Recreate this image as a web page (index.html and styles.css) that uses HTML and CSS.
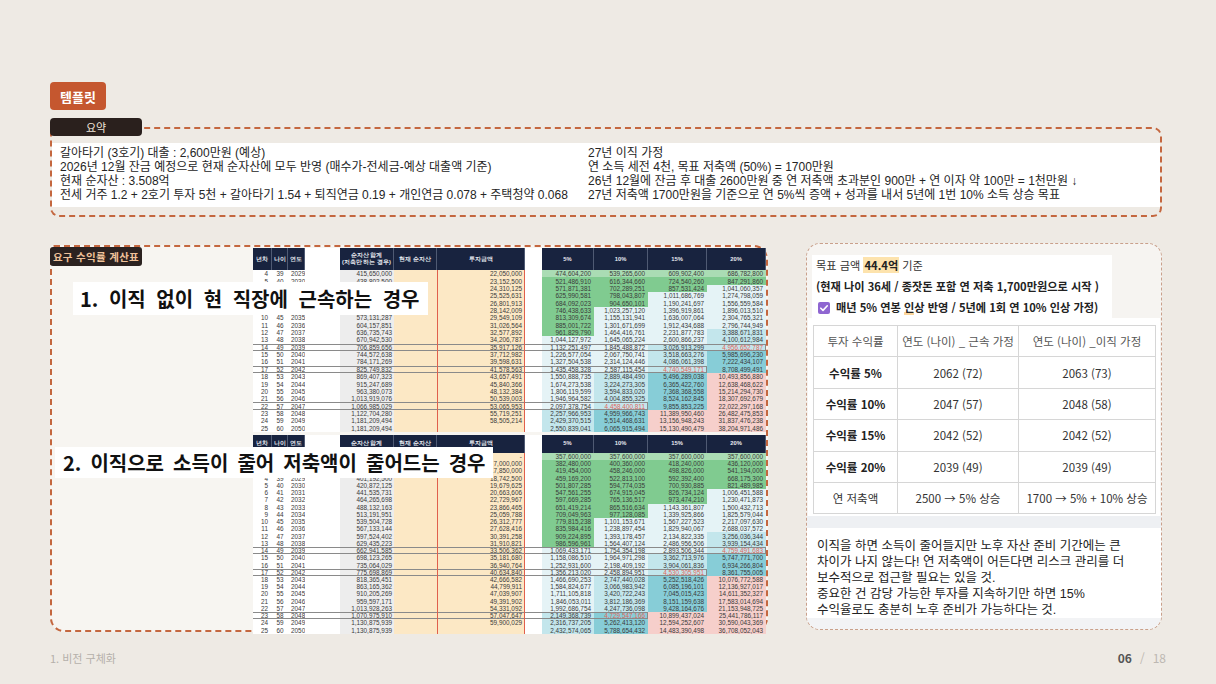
FILE: index.html
```html
<!DOCTYPE html>
<html lang="ko">
<head>
<meta charset="utf-8">
<title>요구 수익률 계산표</title>
<link rel="stylesheet" href="styles.css">
</head>
<body>
<div class="slide">
  <div class="badge">템플릿</div>

  <section class="summary">
    <div class="tab">요약</div>
    <div class="sum-box">
      <div class="sum-band">
        <div class="sum-col">
          <p>갈아타기 (3호기) 대출 : 2,600만원 (예상)</p>
          <p>2026년 12월 잔금 예정으로 현재 순자산에 모두 반영 (매수가-전세금-예상 대출액 기준)</p>
          <p>현재 순자산 : 3.508억</p>
          <p>전세 거주 1.2 + 2호기 투자 5천 + 갈아타기 1.54 + 퇴직연금 0.19 + 개인연금 0.078 + 주택청약 0.068</p>
        </div>
        <div class="sum-col">
          <p>27년 이직 가정</p>
          <p>연 소득 세전 4천, 목표 저축액 (50%) = 1700만원</p>
          <p>26년 12월에 잔금 후 대출 2600만원 중 연 저축액 초과분인 900만 + 연 이자 약 100만 = 1천만원 ↓</p>
          <p>27년 저축액 1700만원을 기준으로 연 5%씩 증액 + 성과를 내서 5년에 1번 10% 소득 상승 목표</p>
        </div>
      </div>
    </div>
  </section>

  <div class="middle">
    <section class="calc">
      <div class="calc-tab">요구 수익률 계산표</div>
      <div class="sheets">
        <div class="sheet sheet1" id="sheet1"></div>
        <div class="sheet sheet2" id="sheet2"></div>
      </div>
      <div class="case case1">1. 이직 없이 현 직장에 근속하는 경우</div>
      <div class="case case2">2. 이직으로 소득이 줄어 저축액이 줄어드는 경우</div>
    </section>

    <section class="result">
      <div class="goal">
        <p>목표 금액 <b class="hi">44.4억</b> 기준</p>
        <p class="bold">(현재 나이 36세 / 종잣돈 포함 연 저축 1,700만원으로 시작 )</p>
        <p class="bold"><svg class="box" width="12" height="12" viewBox="0 0 12 12"><rect x="0" y="0" width="12" height="12" rx="2" fill="#8f66d1"/><path d="M2.8 6.2 L5 8.4 L9.3 3.8" fill="none" stroke="#fff" stroke-width="1.6" stroke-linecap="round" stroke-linejoin="round"/></svg>매년 5% 연봉 <span class="mark">인</span>상 반영 / 5년에 1회 연 10% 인상 가정)</p>
      </div>
      <div class="tbl-wrap">
        <table class="rt">
          <tr><th>투자 수익률</th><th>연도 (나이) _ 근속 가정</th><th>연도 (나이) _이직 가정</th></tr>
          <tr><td class="k">수익률 5%</td><td>2062 (72)</td><td>2063 (73)</td></tr>
          <tr><td class="k">수익률 10%</td><td>2047 (57)</td><td>2048 (58)</td></tr>
          <tr><td class="k">수익률 15%</td><td>2042 (52)</td><td>2042 (52)</td></tr>
          <tr><td class="k">수익률 20%</td><td>2039 (49)</td><td>2039 (49)</td></tr>
          <tr><td>연 저축액</td><td>2500 → 5% 상승</td><td>1700 → 5% + 10% 상승</td></tr>
        </table>
      </div>
      <div class="band"></div>
      <div class="note">
        이직을 하면 소득이 줄어들지만 노후 자산 준비 기간에는 큰<br>
        차이가 나지 않는다! 연 저축액이 어든다면 리스크 관리를 더<br>
        보수적으로 접근할 필요는 있을 것.<br>
        중요한 건 감당 가능한 투자를 지속하기만 하면 15%<br>
        수익율로도 충분히 노후 준비가 가능하다는 것.
      </div>
      <div class="tail"></div>
    </section>
  </div>

  <footer class="foot">
    <span class="sec">1. 비전 구체화</span>
    <span class="pg"><b>06</b><span class="sl">/</span>18</span>
  </footer>
</div>
<script src="script.js"></script>
</body>
</html>
```

FILE: styles.css
```css
* { box-sizing: border-box; margin: 0; padding: 0; }
html, body { width: 1216px; height: 684px; overflow: hidden; }
body {
  background: #eeeae4;
  font-family: "Noto Sans CJK KR", "Noto Sans", sans-serif;
  color: #222;
}
.slide { padding: 82px 54px 0 50px; }

.badge {
  display: flex; align-items: center; justify-content: center;
  width: 56px; height: 28px;
  background: #c5572f; color: #fff;
  font-size: 13px; font-weight: 700;
  border-radius: 4px;
}

/* summary */
.summary { margin-top: 8px; }
.tab {
  position: relative; z-index: 2;
  width: 92px; height: 18px;
  background: #2a201d; color: #efe5da;
  font-size: 11px;
  border-radius: 4px;
  display: flex; align-items: center; justify-content: center;
}
.sum-box {
  margin-top: -9px;
  height: 90px;
  border: 2px dashed #c4673f;
  border-radius: 4px 9px 9px 9px;
  padding-top: 14px;
}
.sum-band {
  background: #fff;
  height: 64px;
  padding: 3px 8px;
  display: flex;
  font-family: "Liberation Sans", "Noto Sans CJK KR", sans-serif;
  font-size: 12px; line-height: 14px;
  color: #252525;
  white-space: nowrap;
}
.sum-col { width: 528px; }

/* middle */
.middle { display: flex; align-items: flex-start; gap: 38px; margin-top: 26px; }

.calc {
  position: relative;
  margin-top: 2px;
  width: 718px; height: 387px;
  border: 2px dashed #c4673f;
  border-radius: 4px 14px 14px 14px;
  background: #f7f5f1;
}
.calc-tab {
  position: absolute; top: 0; left: -2px; z-index: 3;
  width: 92px; height: 19px;
  background: #2b2220; color: #f0c29a;
  font-size: 10.5px; font-weight: 700;
  border-radius: 3px;
  display: flex; align-items: center; justify-content: center;
  letter-spacing: 0.3px;
}
.sheets { margin: 1px 0 0 201px; width: 513px; }

.sheet {
  display: grid;
  grid-template-columns: 19px 16px 17px 35px 54px 43px 88px 17px 52px 54px 59px 59px;
  background: #fff;
  font-family: "Liberation Sans", Arial, sans-serif;
  font-size: 6.4px;
  color: #3a3a3a;
}
.sheet1 { grid-template-rows: 22px repeat(22, 7.36px); }
.sheet2 { margin-top: 3px; grid-template-rows: 18px repeat(25, 7.24px); }

.hd {
  background: #18233f; color: #e8eaf0;
  font-size: 5.8px; font-weight: 700; line-height: 7px;
  display: flex; align-items: center; justify-content: center;
  text-align: center;
  border-right: 1px solid #4f5a73;
}
.hd-gap { background: #fff; border-right: 0; }

.cell {
  display: flex; align-items: center; justify-content: flex-end;
  padding-right: 2px;
  white-space: nowrap; overflow: hidden;
}
.c-n { padding-right: 4px; }
.c-a { justify-content: center; padding: 0; }
.c-y { justify-content: flex-start; padding: 0 0 0 3px; }
.c-net { background: #ededed; }
.c-cur { background: #fce8c5; }
.c-inv { background: #fce8c5; border-left: 1px solid #e0604d; border-right: 1px solid #e0604d; }
.c-p { padding-right: 3px; }

.bg-1 { background: #aadcb4; }
.bg-2 { background: #80cb90; }
.bg-p { background: #e5f3f6; }
.bg-l { background: #c3e6ec; }
.bg-t { background: #87cdd7; }
.bg-k { background: #f6cfcb; }

.hl { box-shadow: inset 0 1px 0 #8a8a8a, inset 0 -1px 0 #8a8a8a; }
.hl.end { box-shadow: inset 0 1px 0 #8a8a8a, inset 0 -1px 0 #8a8a8a, inset -1px 0 0 #8a8a8a; }
.red { color: #e2665c; }

.case {
  position: absolute; z-index: 4;
  background: #fff;
  font-size: 20px; font-weight: 700; color: #111;
  display: flex; align-items: center;
  white-space: nowrap;
}
.case1 { left: 21px; top: 35px; width: 355px; height: 33px; padding-left: 7px; word-spacing: 5px; }
.case2 { left: 3px; top: 200px; width: 438px; height: 31px; padding-left: 8px; word-spacing: 3.5px; }

/* right panel */
.result {
  width: 356px; height: 387px;
  border: 1px dashed #c9a08b;
  border-radius: 14px;
  background: #f6f4f1;
  padding: 11px 0 0 0;
  overflow: hidden;
  display: flex; flex-direction: column;
}
.goal {
  margin-left: 5px;
  width: 300px; height: 63px;
  background: #fff;
  padding-left: 4px;
  font-size: 11.2px; line-height: 21px;
  color: #333;
  white-space: nowrap;
}
.goal .bold { font-weight: 700; color: #222; }
.hi { background: #fde3ad; font-weight: 700; color: #222; padding: 0 1px; }
.goal .box { display: inline-block; vertical-align: -2px; margin: 0 6px 0 2px; }
.mark { background: linear-gradient(to bottom, transparent 80%, #fcd69c 80%); }

.tbl-wrap {
  margin-left: 1px;
  width: 352px;
  background: #fff;
  padding: 7px 0 2px 5px;
}
.rt {
  width: 343px;
  border-collapse: collapse;
  font-size: 11.5px;
  color: #333;
  table-layout: fixed;
}
.rt th, .rt td {
  border: 1px solid #d6d6d6;
  height: 31.4px;
  text-align: center;
  font-weight: 400;
  white-space: nowrap;
  padding: 0;
}
.rt th { color: #555; }
.rt th:nth-child(1) { width: 84px; }
.rt th:nth-child(2) { width: 121px; }
.rt td.k { font-weight: 700; color: #222; }

.band { height: 12px; background: #eef0f3; }
.note {
  height: 90px;
  background: #fff;
  padding: 10px 0 0 10px;
  font-family: "Liberation Sans", "Noto Sans CJK KR", sans-serif;
  font-size: 12.5px; line-height: 16px;
  color: #222;
  white-space: nowrap;
}
.tail { flex: 1; background: #f2f3f5; }

/* footer */
.foot {
  margin-top: 18px; margin-right: -4px;
  display: flex; justify-content: space-between;
  font-size: 11px; line-height: 16px;
  color: #b5b0aa;
}
.pg { font-size: 12px; color: #bdb8b2; }
.pg b { color: #555; font-weight: 700; }
.pg .sl { margin: 0 8px; }
```

FILE: script.js
```js
(function () {
  var COLS = ['c-n', 'c-a', 'c-y', 'c-gap', 'c-net', 'c-cur', 'c-inv', 'c-gap', 'c-p', 'c-p', 'c-p', 'c-p'];
  function rep(s, n) { return new Array(n + 1).join(s); }
  function sp(s) { return s.split(' '); }

  function build(id, cfg) {
    var el = document.getElementById(id);
    cfg.head.forEach(function (h) {
      var d = document.createElement('div');
      d.className = h ? 'hd' : 'hd hd-gap';
      d.innerHTML = h;
      el.appendChild(d);
    });
    for (var i = 0; i < cfg.net.length; i++) {
      var yr = cfg.start + i;
      var hidden = cfg.hidden.indexOf(i + 1) !== -1; /* rows covered by the caption overlay */
      var row = [String(yr), String(yr + 35), String(yr + 2025), '', cfg.net[i], '', cfg.inv[i], '',
        cfg.p[0][i], cfg.p[1][i], cfg.p[2][i], cfg.p[3][i]];
      var hl = cfg.hl[i + 1];
      for (var j = 0; j < row.length; j++) {
        var d = document.createElement('div');
        var cls = 'cell ' + COLS[j];
        if (j >= 8) cls += ' bg-' + cfg.c[j - 8].charAt(i);
        if (hl !== undefined && j <= hl) {
          cls += ' hl';
          if (j === hl) cls += ' end red';
        }
        d.className = cls;
        d.textContent = (hidden && j <= 5) ? '' : row[j];
        el.appendChild(d);
      }
    }
  }

  build('sheet1', {
    start: 4,
    hidden: [3, 4, 5, 6],
    head: ['년차', '나이', '연도', '', '순자산 합계<br>(저축만 하는 경우)', '현재 순자산', '투자금액', '', '5%', '10%', '15%', '20%'],
    net: sp('415,650,000 438,802,500 463,112,625 488,638,256 515,440,169 543,582,178 573,131,287 604,157,851 636,735,743 670,942,530 706,859,656 744,572,638 784,171,269 825,749,832 869,407,323 915,247,689 963,380,073 1,013,919,076 1,066,985,029 1,122,704,280 1,181,209,494 1,181,209,494'),
    inv: sp('22,050,000 23,152,500 24,310,125 25,525,631 26,801,913 28,142,009 29,549,109 31,026,564 32,577,892 34,206,787 35,917,126 37,712,982 39,598,631 41,578,563 43,657,491 45,840,366 48,132,384 50,539,003 53,065,953 55,719,251 58,505,214').concat(['']),
    p: [
      sp('474,604,200 521,486,910 571,871,381 625,990,581 684,092,023 746,438,633 813,309,674 885,001,722 961,829,790 1,044,127,972 1,132,251,497 1,226,577,054 1,327,504,538 1,435,458,328 1,550,888,735 1,674,273,538 1,806,119,599 1,946,964,582 2,097,378,754 2,257,966,953 2,429,370,515 2,550,839,041'),
      sp('539,265,600 616,344,660 702,289,251 798,043,807 904,650,101 1,023,257,120 1,155,131,941 1,301,671,699 1,464,416,761 1,645,065,224 1,845,488,872 2,067,750,741 2,314,124,446 2,587,115,454 2,889,484,490 3,224,273,305 3,594,833,020 4,004,855,325 4,458,400,811 4,959,966,743 5,514,468,631 6,065,915,494'),
      sp('609,902,400 724,540,260 857,531,424 1,011,686,769 1,190,241,697 1,396,919,861 1,636,007,064 1,912,434,688 2,231,877,783 2,600,866,237 3,026,913,299 3,518,663,276 4,086,061,398 4,740,549,171 5,496,289,038 6,365,422,760 7,368,368,558 8,524,162,845 9,855,853,225 11,389,950,460 13,156,948,243 15,130,490,479'),
      sp('686,782,800 847,291,860 1,041,060,357 1,274,798,059 1,556,559,584 1,896,013,510 2,304,765,321 2,796,744,949 3,388,671,831 4,100,612,984 4,956,652,787 5,985,696,230 7,222,434,107 8,708,499,491 10,493,856,880 12,638,468,622 15,214,294,730 18,307,692,679 22,022,297,168 26,482,475,853 31,837,476,238 38,204,971,486')
    ],
    c: [
      '1' + rep('2', 8) + rep('p', 10) + rep('l', 3),
      '1' + rep('2', 4) + rep('p', 9) + rep('l', 5) + rep('t', 3),
      '1' + rep('2', 2) + rep('p', 7) + rep('l', 4) + rep('t', 5) + rep('k', 3),
      '12' + rep('p', 6) + rep('l', 3) + rep('t', 3) + rep('k', 8)
    ],
    hl: { 11: 11, 14: 10, 19: 9 }
  });

  build('sheet2', {
    start: 1,
    hidden: [1, 2, 3],
    head: ['년차', '나이', '연도', '', '순자산 합계', '현재 순자산', '투자금액', '', '5%', '10%', '15%', '20%'],
    net: sp('357,600,000 364,600,000 382,450,000 401,192,500 420,872,125 441,535,731 464,265,698 488,132,163 513,191,951 539,504,728 567,133,144 597,524,402 629,435,223 662,941,585 698,123,265 735,064,029 775,698,869 818,365,451 863,165,362 910,205,269 959,597,171 1,013,928,263 1,070,975,910 1,130,875,939 1,130,875,939'),
    inv: sp('- 7,000,000 17,850,000 18,742,500 19,679,625 20,663,606 22,729,967 23,866,465 25,059,788 26,312,777 27,628,416 30,391,258 31,910,821 33,506,362 35,181,680 36,940,764 40,634,840 42,666,582 44,799,911 47,039,907 49,391,902 54,331,092 57,047,647 59,900,029').concat(['']),
    p: [
      sp('357,600,000 382,480,000 419,454,000 459,169,200 501,807,285 547,561,255 597,669,285 651,419,214 709,049,963 779,815,238 835,984,416 909,224,895 986,596,961 1,069,433,171 1,158,086,510 1,252,931,600 1,356,213,020 1,466,690,253 1,584,824,677 1,711,105,818 1,846,053,011 1,992,686,754 2,149,368,739 2,316,737,205 2,432,574,065'),
      sp('357,600,000 400,360,000 458,246,000 522,813,100 594,774,035 674,915,045 765,136,517 865,516,634 977,128,085 1,101,153,671 1,238,897,454 1,393,178,457 1,564,407,124 1,754,354,198 1,964,971,298 2,198,409,192 2,458,894,951 2,747,440,028 3,066,983,942 3,420,722,243 3,812,186,369 4,247,736,098 4,729,547,166 5,262,413,120 5,788,654,432'),
      sp('357,600,000 418,240,000 498,826,000 592,392,400 700,930,885 826,734,124 973,474,210 1,143,361,807 1,339,925,866 1,567,227,523 1,829,940,067 2,134,822,335 2,486,956,506 2,893,506,344 3,362,713,976 3,904,061,836 4,530,305,951 5,252,518,426 6,085,196,101 7,045,015,423 8,151,159,638 9,428,164,676 10,899,437,024 12,594,252,607 14,483,390,498'),
      sp('357,600,000 436,120,000 541,194,000 668,175,300 821,489,985 1,006,451,588 1,230,471,873 1,500,432,713 1,825,579,044 2,217,097,630 2,688,037,572 3,256,036,344 3,939,154,434 4,759,491,683 5,747,771,700 6,934,266,804 8,361,755,005 10,076,772,588 12,136,927,017 14,611,352,327 17,583,014,694 21,153,948,725 25,441,786,117 30,590,043,369 36,708,052,043')
    ],
    c: [
      '1' + rep('2', 12) + rep('p', 9) + rep('l', 3),
      '1' + rep('2', 8) + rep('p', 8) + rep('l', 5) + rep('t', 3),
      '1' + rep('2', 6) + rep('p', 7) + rep('l', 3) + rep('t', 5) + rep('k', 3),
      '1' + rep('2', 4) + rep('p', 6) + rep('l', 3) + rep('t', 3) + rep('k', 8)
    ],
    hl: { 14: 11, 17: 10, 23: 9 }
  });
})();
```
